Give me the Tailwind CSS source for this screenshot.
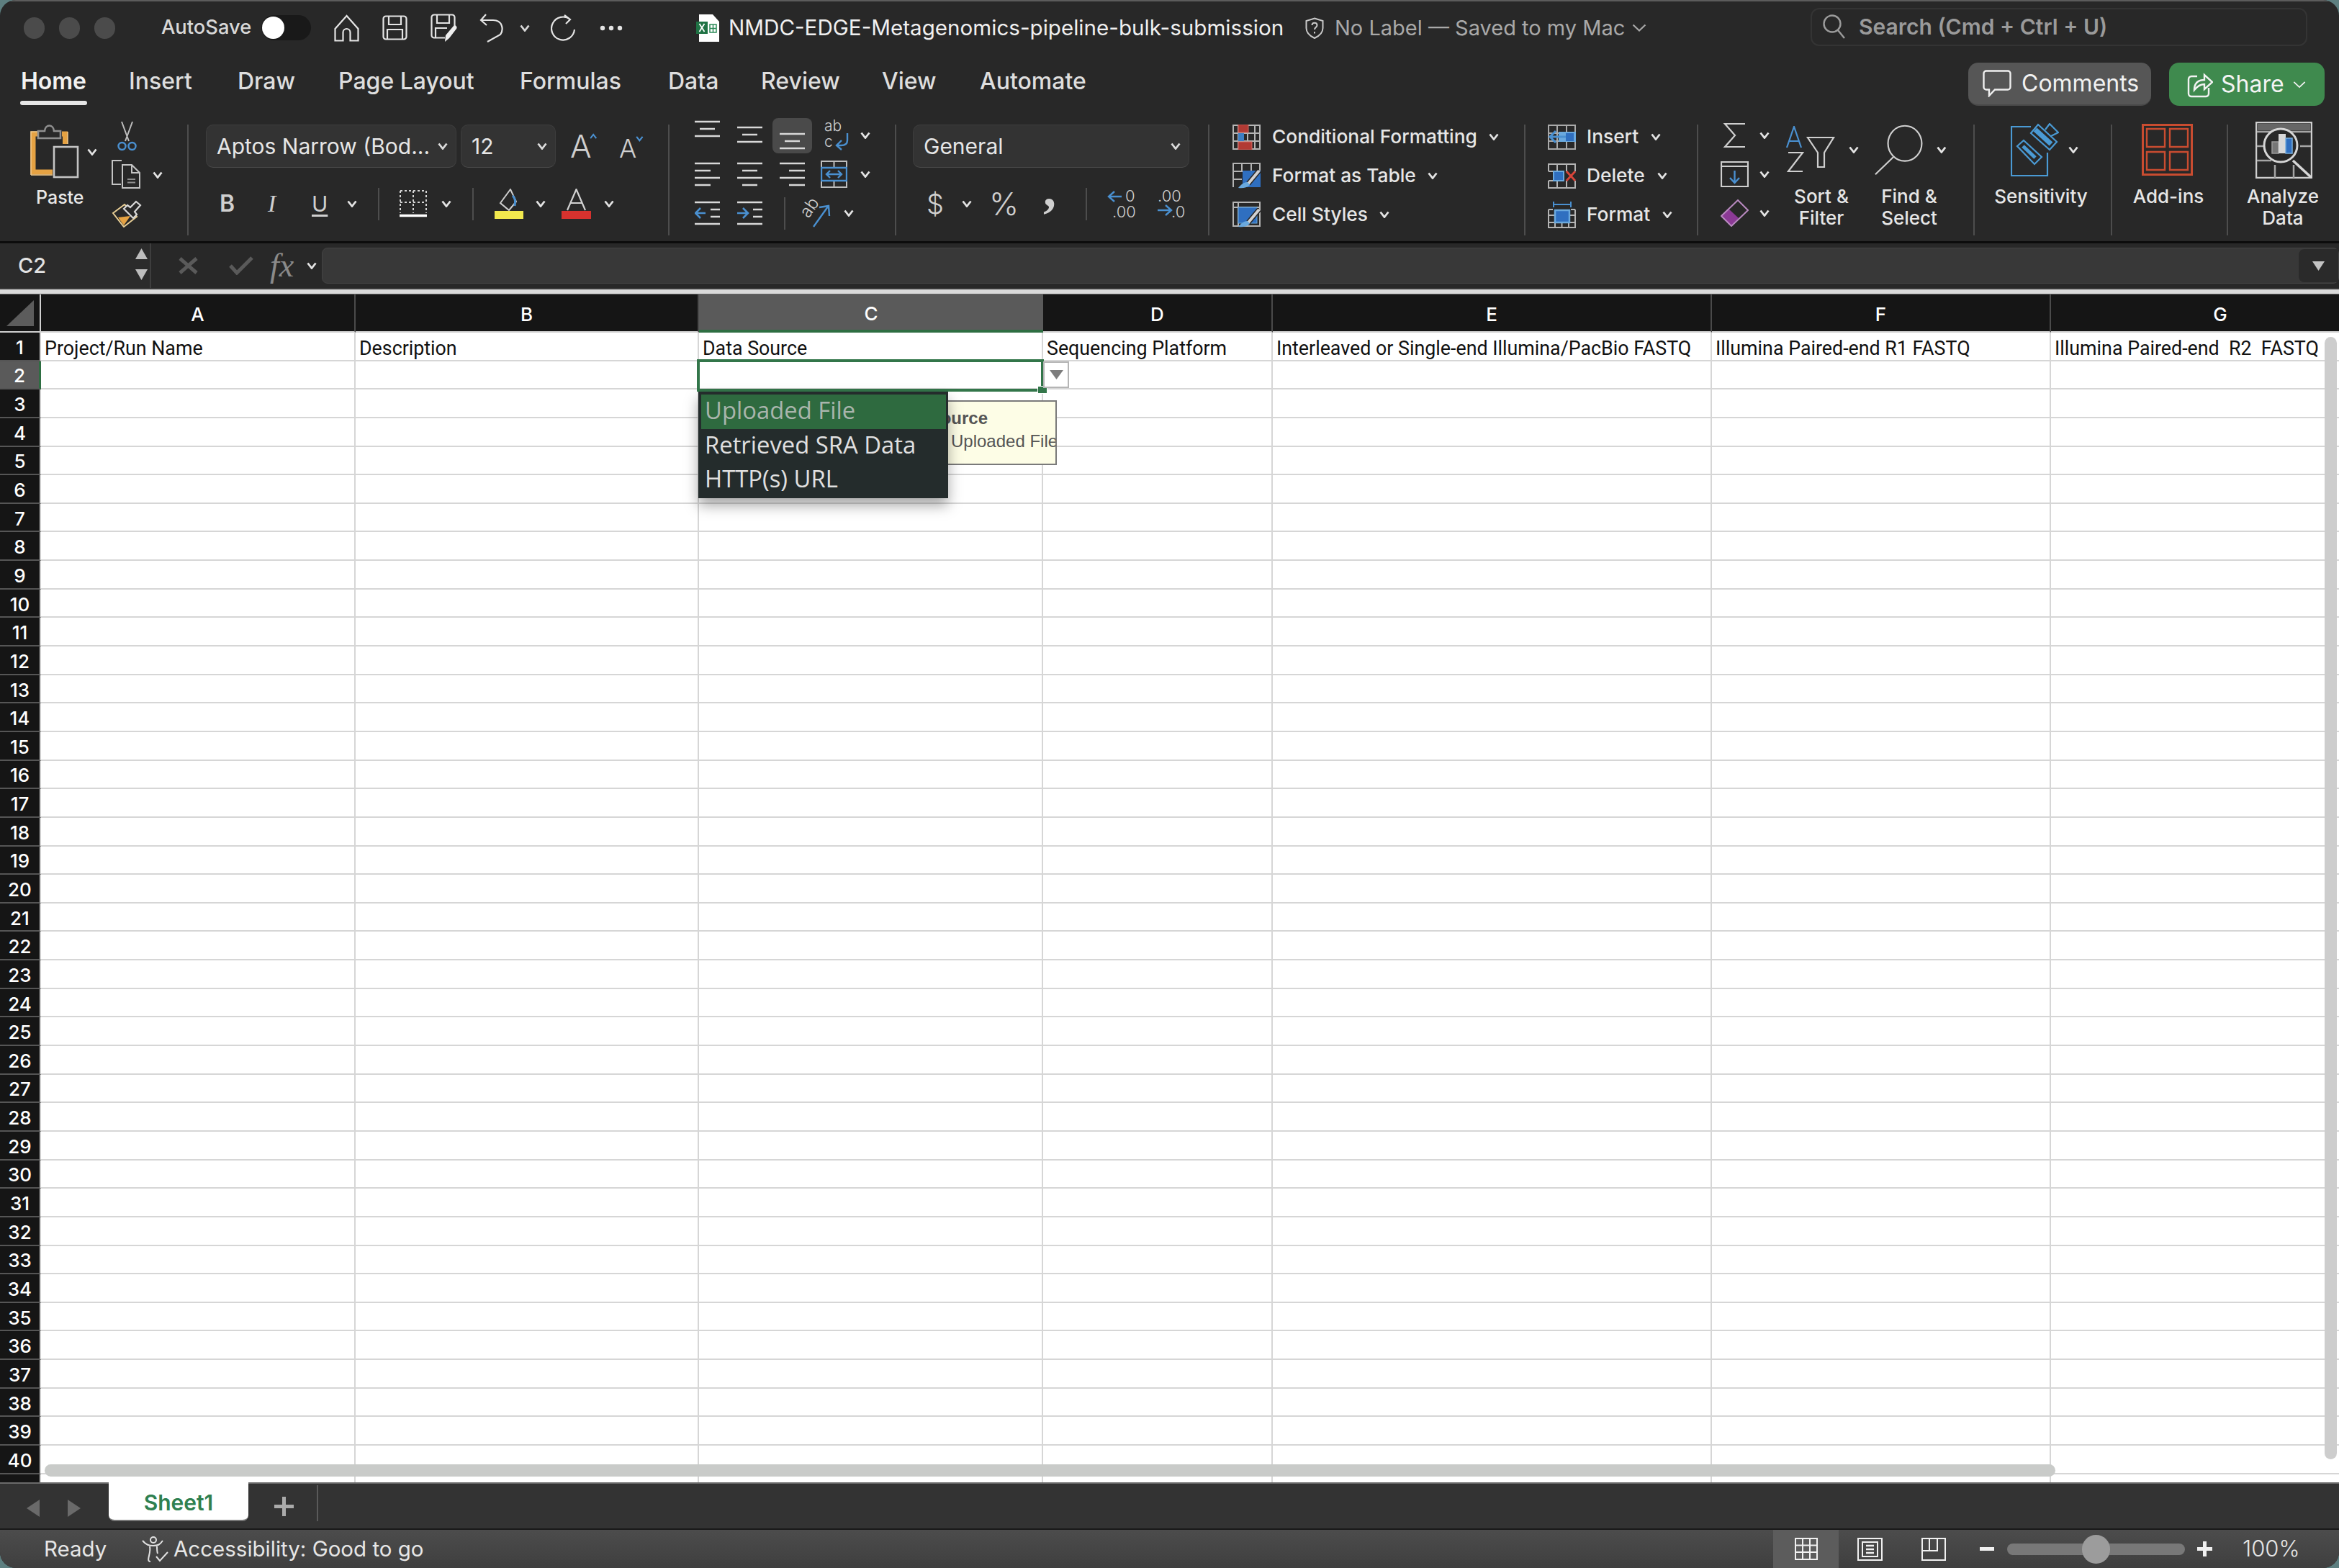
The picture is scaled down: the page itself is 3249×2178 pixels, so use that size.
<!DOCTYPE html>
<html lang="en">
<head>
<meta charset="UTF-8">
<title>NMDC-EDGE-Metagenomics-pipeline-bulk-submission</title>
<script src="https://cdn.jsdelivr.net/npm/@tailwindcss/browser@4"></script>
</head>
<body class="bg-[#5d7f80] w-[3249px] h-[2178px] overflow-hidden">
<!-- shared little icons -->
<svg class="hidden">
  <symbol id="chev" viewBox="0 0 14 10"><path d="M1.500 1.500 7 8.500l5.500-7" fill="none" stroke="currentColor" stroke-width="2.800"/></symbol>
  <symbol id="cells" viewBox="0 0 39 35"><path d="M1 1h37v33H1zM1 12h37M1 23h37M13 1v33M26 1v33" fill="none" stroke="#a9a9a9" stroke-width="2"/></symbol>
  <symbol id="al-top" viewBox="0 0 35 24"><path d="M0 2h35M7 12h21M0 22h35" fill="none" stroke="#d8d8d8" stroke-width="2.600"/></symbol>
  <symbol id="al-left" viewBox="0 0 35 34"><path d="M0 2h35M0 12h22M0 22h35M0 32h22" fill="none" stroke="#d8d8d8" stroke-width="2.600"/></symbol>
  <symbol id="al-center" viewBox="0 0 35 34"><path d="M0 2h35M7 12h21M0 22h35M7 32h21" fill="none" stroke="#d8d8d8" stroke-width="2.600"/></symbol>
  <symbol id="al-right" viewBox="0 0 35 34"><path d="M0 2h35M13 12h22M0 22h35M13 32h22" fill="none" stroke="#d8d8d8" stroke-width="2.600"/></symbol>
  <symbol id="brush" viewBox="0 0 39 36"><path d="M37 11 22 29" stroke="#282828" stroke-width="7"/><path d="M37 11 22 29" stroke="#d2d2d2" stroke-width="4"/><path d="M21 27c-5 0-9 3-13 8 6 1 12 0 16-4z" fill="#6aa9de"/></symbol>
</svg>

<div class="w-[3249px] h-[2178px] flex flex-col overflow-hidden rounded-[22px] bg-[#282828] [font-family:Inter,sans-serif] text-[#e6e6e6]">

  <!-- title bar -->
  <header class="h-[75px] shrink-0 flex items-center pl-[33px] border-t-2 border-[#5c5c5c]">
    <div class="flex gap-[20px]">
      <i class="w-[29px] h-[30px] rounded-full bg-[#4b4b4b]"></i>
      <i class="w-[29px] h-[30px] rounded-full bg-[#4b4b4b]"></i>
      <i class="w-[29px] h-[30px] rounded-full bg-[#4b4b4b]"></i>
    </div>
    <span class="ml-[64px] w-[124px] text-[27.300px] font-medium text-[#d8d8d8] whitespace-nowrap">AutoSave</span>
    <div class="ml-[15px] w-[69px] h-[35px] rounded-full bg-[#191919] flex items-center pl-[1px]"><i class="w-[31px] h-[31px] rounded-full bg-white"></i></div>
    <svg class="ml-[32px] w-[35px] h-[38px]" viewBox="0 0 35 38" fill="none" stroke="#e4e4e4" stroke-width="2.200"><path d="M17.500 2 1.500 20v16.500h11V25a5 5 0 0 1 10 0v11.500h11V20z"/></svg>
    <svg class="ml-[32px] w-[35px] h-[35px]" viewBox="0 0 35 35" fill="none" stroke="#e4e4e4" stroke-width="2.200"><path d="M5 1.500h25a3.500 3.500 0 0 1 3.500 3.500v25a3.500 3.500 0 0 1-3.500 3.500H5A3.500 3.500 0 0 1 1.500 30V5A3.500 3.500 0 0 1 5 1.500zM9 1.500V13h17V1.500M7 33.500V20h21v13.500"/></svg>
    <svg class="ml-[32px] w-[38px] h-[40px]" viewBox="0 0 38 40" fill="none" stroke="#e4e4e4" stroke-width="2.200"><path d="M20 33.500H5A3.500 3.500 0 0 1 1.500 30V5A3.500 3.500 0 0 1 5 1.500h25A3.500 3.500 0 0 1 33.500 5v12M9 1.500V13h17V1.500M7 33.500V20h16"/><path d="M21 30 32 17c2-2 6 1 4 4L26 34l-6 5z" fill="#efefef" stroke="none"/></svg>
    <svg class="ml-[30px] w-[34px] h-[40px]" viewBox="0 0 34 40" fill="none" stroke="#e4e4e4" stroke-width="2.200"><path d="M9 1 2 9l8 7M2 9h17c13 0 15 13 10 20L11 39"/></svg>
    <svg class="ml-[22px] w-[14px] h-[10px] text-[#d8d8d8]"><use href="#chev"/></svg>
    <svg class="ml-[29px] w-[36px] h-[38px]" viewBox="0 0 36 38" fill="none" stroke="#e4e4e4" stroke-width="2.200"><path d="M27 7A16 16 0 1 0 33 21M19 1l8 6-6 6"/></svg>
    <svg class="ml-[32px] w-[32px] h-[8px]" viewBox="0 0 32 8" fill="#e4e4e4"><circle cx="4" cy="4" r="3.200"/><circle cx="16" cy="4" r="3.200"/><circle cx="28" cy="4" r="3.200"/></svg>
    <svg class="ml-[102px] w-[32px] h-[38px]" viewBox="0 0 32 38"><path d="M4 0h19l9 10v28H4z" fill="#fff"/><rect y="10" width="16" height="17" fill="#1f7244"/><path d="M4.500 13l7 11M11.500 13l-7 11" stroke="#fff" stroke-width="1.800"/><path d="M19 14h9v11h-9zM19 19.500h9M23.500 14v11" fill="none" stroke="#2d8a58" stroke-width="1.500"/></svg>
    <span class="ml-[13px] w-[770px] text-[29.600px] text-[#f0f0f0] whitespace-nowrap">NMDC-EDGE-Metagenomics-pipeline-bulk-submission</span>
    <svg class="ml-[31px] w-[26px] h-[30px]" viewBox="0 0 26 30" fill="none" stroke="#c9c9c9" stroke-width="2"><path d="M13 1.500 24.500 5v10c0 8-6 11.500-11.500 14C7.500 26.500 1.500 23 1.500 15V5z"/><path d="M9.500 11c0-4.500 7-4.500 7 0 0 3-3.500 3-3.500 6M13 20v2.500"/></svg>
    <span class="ml-[15px] w-[404px] text-[29px] text-[#a9a9a9] whitespace-nowrap">No Label — Saved to my Mac</span>
    <svg class="ml-[9px] w-[20px] h-[11px] text-[#a9a9a9]" viewBox="0 0 20 11" fill="none" stroke="currentColor" stroke-width="2.200"><path d="M1.500 1.500 10 9.500l8.500-8"/></svg>
    <div class="ml-[228px] w-[690px] h-[53px] rounded-[12px] border-2 border-[#343434] flex items-center pl-[15px] mt-[-3px]">
      <svg class="w-[31px] h-[34px]" viewBox="0 0 31 34" fill="none" stroke="#9c9c9c" stroke-width="2.400"><circle cx="13" cy="13" r="11.500"/><path d="M21 22l9 11"/></svg>
      <span class="ml-[19px] text-[30px] font-semibold text-[#9a9a9a] whitespace-nowrap">Search (Cmd + Ctrl + U)</span>
    </div>
  </header>

  <!-- tabs -->
  <nav class="h-[75px] shrink-0 flex items-start text-[32px] font-medium text-[#dedede] whitespace-nowrap">
    <div class="ml-[28px] w-[93px] h-[71px] flex flex-col items-center pt-[14px] relative text-[#f2f2f2] font-semibold">Home<i class="absolute left-0 bottom-[0px] w-[93px] h-[6px] rounded-full bg-[#e6e6e6]"></i></div>
    <span class="ml-[58px] w-[88px] text-center pt-[14px]">Insert</span>
    <span class="ml-[63px] w-[78px] text-center pt-[14px]">Draw</span>
    <span class="ml-[62px] w-[188px] text-center pt-[14px]">Page Layout</span>
    <span class="ml-[64px] w-[141px] text-center pt-[14px]">Formulas</span>
    <span class="ml-[65px] w-[70px] text-center pt-[14px]">Data</span>
    <span class="ml-[59px] w-[108px] text-center pt-[14px]">Review</span>
    <span class="ml-[60px] w-[73px] text-center pt-[14px]">View</span>
    <span class="ml-[63px] w-[147px] text-center pt-[14px]">Automate</span>
    <div class="ml-auto mt-[12px] w-[254px] h-[60px] rounded-[14px] bg-[#565656] border-b-2 border-[#484848] flex items-center pl-[20px] text-[#f2f2f2]">
      <svg class="w-[40px] h-[38px]" viewBox="0 0 40 38" fill="none" stroke="#efefef" stroke-width="2.400"><path d="M5 1.500h30a3.500 3.500 0 0 1 3.500 3.500v19a3.500 3.500 0 0 1-3.500 3.500H17L9 36v-8.500H5A3.500 3.500 0 0 1 1.500 24V5A3.500 3.500 0 0 1 5 1.500z"/></svg>
      <span class="ml-[14px] font-normal">Comments</span>
    </div>
    <div class="ml-[25px] mr-[20px] mt-[12px] w-[216px] h-[60px] rounded-[14px] bg-[#3f8a4e] flex items-center pl-[25px] text-[#f4f4f4]">
      <svg class="w-[36px] h-[38px]" viewBox="0 0 36 38" fill="none" stroke="#f2f2f2" stroke-width="2.400"><path d="M14 8H6a4 4 0 0 0-4 4v20a4 4 0 0 0 4 4h20a4 4 0 0 0 4-4v-8"/><path d="M10 27c0-9 5-14 14-14V6l11 10-11 10v-7c-6 0-10 3-14 8z"/></svg>
      <span class="ml-[11px] font-normal">Share</span>
      <svg class="ml-[12px] w-[18px] h-[11px] text-[#f2f2f2]" viewBox="0 0 20 11" fill="none" stroke="currentColor" stroke-width="2"><path d="M1.500 1.500 10 9.500l8.500-8"/></svg>
    </div>
  </nav>

  <!-- ribbon -->
  <section class="h-[185px] shrink-0 flex items-start text-[26px] font-medium whitespace-nowrap">

    <!-- clipboard -->
    <div class="w-[260px] shrink-0 flex">
      <div class="ml-[42px] mt-[23px] w-[93px]">
        <div class="flex items-center">
          <svg class="w-[68px] h-[75px]" viewBox="0 0 68 75" fill="none"><path d="M11 13H4v53h27" stroke="#e5a243" stroke-width="7"/><path d="M44 13h4.500v14" stroke="#e5a243" stroke-width="7"/><path d="M1 70h30M1 70V10h9M52 10v17" stroke="#f0c98c" stroke-width="1.500"/><path d="M11 19V9h9c1-10 12-10 13 0h9v10z" fill="#282828" stroke="#8f8f8f" stroke-width="2.600"/><rect x="33" y="31" width="33" height="42" fill="#282828" stroke="#c4c4c4" stroke-width="2.600"/></svg>
          <svg class="ml-[11px] w-[14px] h-[10px] text-[#e4e4e4]"><use href="#chev"/></svg>
        </div>
        <div class="mt-[8px] ml-[8px] text-[25px] text-[#e8e8e8]">Paste</div>
      </div>
      <div class="ml-[20px] flex flex-col">
        <svg class="ml-[8px] mt-[18px] w-[27px] h-[42px]" viewBox="0 0 27 42" fill="none" stroke-width="2"><path d="M6 1l10 27M21 1 11 28" stroke="#bdbdbd"/><circle cx="6.500" cy="35" r="5" stroke="#4a90d0" stroke-width="2.400"/><circle cx="20.500" cy="35" r="5" stroke="#4a90d0" stroke-width="2.400"/></svg>
        <div class="mt-[12px] flex items-center">
          <svg class="w-[42px] h-[41px]" viewBox="0 0 42 41" fill="none" stroke="#c4c4c4" stroke-width="2"><path d="M14 1H1v33h12"/><path d="M15 7h13l11 11v21H15zM28 7v11h11"/><path d="M22 27h11M22 31.500h11" stroke="#8f8f8f" stroke-width="2.200"/></svg>
          <svg class="ml-[15px] w-[14px] h-[10px] text-[#e4e4e4]"><use href="#chev"/></svg>
        </div>
        <svg class="mt-[15px] w-[42px] h-[38px]" viewBox="0 0 42 38" fill="none"><path d="M2 18 18 6l17 17-18 14z" stroke="#e9cf96" stroke-width="2"/><path d="M17 35l9-13-17 2z" fill="#e5a243"/><path d="M34 2l6 5-8 9 3 4-5 5-13-13 5-5 4 3z" fill="#282828" stroke="#d8d8d8" stroke-width="2.200"/></svg>
      </div>
    </div>
    <i class="mt-[23px] w-[2px] h-[154px] shrink-0 bg-[#4d4d4d]"></i>

    <!-- font -->
    <div class="w-[666px] shrink-0 pt-[23px]">
      <div class="flex items-center text-[30px] font-normal h-[60px]">
        <div class="ml-[24px] w-[348px] h-[60px] rounded-[10px] bg-[#333333] border border-[#3d3d3d] border-b-[#4a4a4a] flex items-center justify-between pl-[14px] pr-[11px]">Aptos Narrow (Bod...<svg class="w-[14px] h-[10px] text-[#dcdcdc]"><use href="#chev"/></svg></div>
        <div class="ml-[6px] w-[132px] h-[60px] rounded-[10px] bg-[#333333] border border-[#3d3d3d] border-b-[#4a4a4a] flex items-center justify-between pl-[14px] pr-[11px]">12<svg class="w-[14px] h-[10px] text-[#dcdcdc]"><use href="#chev"/></svg></div>
        <div class="ml-[20px] w-[37px] flex items-start text-[44px] font-light leading-none text-[#cfcfcf]">A<svg class="mt-[4px] w-[12px] h-[9px] text-[#4a90d0] rotate-180 ml-[-3px]"><use href="#chev"/></svg></div>
        <div class="ml-[31px] w-[34px] flex items-start text-[36px] font-light leading-none text-[#cfcfcf] mt-[5px]">A<svg class="w-[12px] h-[9px] text-[#4a90d0] ml-[-1px]"><use href="#chev"/></svg></div>
      </div>
      <div class="mt-[30px] h-[40px] flex items-center">
        <b class="ml-[43px] w-[20px] text-[32px] leading-none font-semibold text-[#cfcfcf]">B</b>
        <em class="ml-[47px] w-[16px] text-[34px] leading-none text-[#cfcfcf] [font-family:'Liberation_Serif',serif]">I</em>
        <span class="ml-[45px] w-[21px] text-[30px] leading-none font-normal text-[#cfcfcf] underline underline-offset-4">U</span>
        <svg class="ml-[28px] w-[14px] h-[10px] text-[#e4e4e4]"><use href="#chev"/></svg>
        <i class="ml-[29px] w-[2px] h-[45px] bg-[#4d4d4d]"></i>
        <svg class="ml-[28px] w-[38px] h-[38px]" viewBox="0 0 38 38" fill="none" stroke="#d6d6d6" stroke-width="2"><path d="M1 1h36M1 1v31M37 1v31M19 1v31M1 17h36" stroke-dasharray="3 3"/><path d="M0 35.500h38" stroke="#fff" stroke-width="3.500"/></svg>
        <svg class="ml-[20px] w-[14px] h-[10px] text-[#e4e4e4]"><use href="#chev"/></svg>
        <i class="ml-[29px] w-[2px] h-[45px] bg-[#4d4d4d]"></i>
        <svg class="ml-[29px] w-[40px] h-[42px]" viewBox="0 0 40 42" fill="none"><path d="M22 1 8 20l12 10 10-12z" stroke="#cfcfcf" stroke-width="2"/><path d="M25 10c4 3 4 9 3 14" stroke="#4a90d0" stroke-width="3"/><rect y="31" width="40" height="11" fill="#f2e94e"/></svg>
        <svg class="ml-[17px] w-[14px] h-[10px] text-[#e4e4e4]"><use href="#chev"/></svg>
        <svg class="ml-[22px] w-[41px] h-[42px]" viewBox="0 0 41 42" fill="none"><path d="M8 30 20.500 1 33 30M12 20h17" stroke="#d2d2d2" stroke-width="2.200"/><rect y="31" width="41" height="11" fill="#d6322e"/></svg>
        <svg class="ml-[18px] w-[14px] h-[10px] text-[#e4e4e4]"><use href="#chev"/></svg>
      </div>
    </div>
    <i class="mt-[23px] w-[2px] h-[154px] shrink-0 bg-[#4d4d4d]"></i>

    <!-- alignment -->
    <div class="w-[313px] shrink-0 pt-[11px]">
      <div class="h-[54px] flex items-center">
        <svg class="ml-[35px] mb-[18px] w-[35px] h-[24px]"><use href="#al-top"/></svg>
        <svg class="ml-[24px] mb-[3px] w-[35px] h-[24px]"><use href="#al-top"/></svg>
        <div class="ml-[14px] w-[55px] h-[49px] rounded-[8px] bg-[#4a4a4a] flex justify-center items-end pb-[5px]"><svg class="w-[35px] h-[24px]"><use href="#al-top"/></svg></div>
        <svg class="ml-[17px] w-[36px] h-[44px] overflow-visible" viewBox="0 0 36 44" fill="none"><text x="0" y="16" font-size="21" fill="#cfcfcf" font-family="Inter" font-weight="300">ab</text><text x="0" y="38" font-size="21" fill="#cfcfcf" font-family="Inter" font-weight="300">c</text><path d="M32 19v10c0 5-4 7-9 7h-6M24 29l-7 7 7 6" stroke="#4a90d0" stroke-width="2.400"/></svg>
        <svg class="ml-[14px] w-[14px] h-[10px] text-[#e4e4e4]"><use href="#chev"/></svg>
      </div>
      <div class="h-[54px] flex items-center">
        <svg class="ml-[35px] w-[35px] h-[34px]"><use href="#al-left"/></svg>
        <svg class="ml-[24px] w-[35px] h-[34px]"><use href="#al-center"/></svg>
        <svg class="ml-[24px] w-[35px] h-[34px]"><use href="#al-right"/></svg>
        <svg class="ml-[22px] w-[37px] h-[38px]" viewBox="0 0 37 38" fill="none"><path d="M1 1h35v36H1zM1 10h35M1 28h35M18.500 1v9M18.500 28v9" stroke="#bdbdbd" stroke-width="2"/><path d="M1 10h35v18H1z" stroke="#4a90d0" stroke-width="2.400"/><path d="M8 19h21M13 14l-5 5 5 5M24 14l5 5-5 5" stroke="#4a90d0" stroke-width="2.400"/></svg>
        <svg class="ml-[18px] w-[14px] h-[10px] text-[#e4e4e4]"><use href="#chev"/></svg>
      </div>
      <div class="h-[54px] flex items-center">
        <svg class="ml-[35px] w-[35px] h-[34px]" viewBox="0 0 35 34" fill="none"><path d="M0 2h35M22 12h13M22 22h13M0 32h35" stroke="#d8d8d8" stroke-width="2.600"/><path d="M15 17H2M8 10l-7 7 7 7" stroke="#4a90d0" stroke-width="2.600"/></svg>
        <svg class="ml-[24px] w-[35px] h-[34px]" viewBox="0 0 35 34" fill="none"><path d="M0 2h35M22 12h13M22 22h13M0 32h35" stroke="#d8d8d8" stroke-width="2.600"/><path d="M0 17h14M8 10l7 7-7 7" stroke="#4a90d0" stroke-width="2.600"/></svg>
        <i class="ml-[30px] w-[2px] h-[45px] bg-[#4d4d4d]"></i>
        <svg class="ml-[26px] w-[41px] h-[40px] overflow-visible" viewBox="0 0 41 40" fill="none"><text transform="translate(6 28) rotate(-55)" font-size="24" fill="#cfcfcf" font-family="Inter" font-weight="300">ab</text><path d="M13 39 33 11M21 12l13-2 1 14" stroke="#4a90d0" stroke-width="2.400"/></svg>
        <svg class="ml-[14px] w-[14px] h-[10px] text-[#e4e4e4]"><use href="#chev"/></svg>
      </div>
    </div>
    <i class="mt-[23px] w-[2px] h-[154px] shrink-0 bg-[#4d4d4d]"></i>

    <!-- number -->
    <div class="w-[433px] shrink-0 pt-[23px]">
      <div class="ml-[23px] w-[384px] h-[60px] rounded-[10px] bg-[#333333] border border-[#3d3d3d] border-b-[#4a4a4a] flex items-center justify-between pl-[14px] pr-[11px] text-[30px] font-normal">General<svg class="w-[14px] h-[10px] text-[#dcdcdc]"><use href="#chev"/></svg></div>
      <div class="mt-[30px] h-[40px] flex items-center text-[#cfcfcf] font-normal leading-none">
        <span class="ml-[42px] w-[20px] text-[38px] font-light">$</span>
        <svg class="ml-[29px] w-[14px] h-[10px] text-[#e4e4e4]"><use href="#chev"/></svg>
        <span class="ml-[24px] w-[37px] text-[44px] font-light">%</span>
        <span class="ml-[38px] w-[19px] text-[72px] font-bold [font-family:'Liberation_Serif',serif] mt-[-40px]">,</span>
        <i class="ml-[40px] w-[2px] h-[45px] bg-[#4d4d4d]"></i>
        <svg class="ml-[28px] w-[40px] h-[40px] overflow-visible" viewBox="0 0 40 40" fill="none"><text x="25" y="17" font-size="22" fill="#cfcfcf" font-family="Inter" font-weight="300">0</text><text x="7" y="39" font-size="22" fill="#cfcfcf" font-family="Inter" font-weight="300">.00</text><path d="M20 10H3M10 3 2 10l8 7" stroke="#4a90d0" stroke-width="2.400"/></svg>
        <svg class="ml-[30px] w-[36px] h-[40px] overflow-visible" viewBox="0 0 36 40" fill="none"><text x="0" y="17" font-size="22" fill="#cfcfcf" font-family="Inter" font-weight="300">.00</text><text x="19" y="39" font-size="22" fill="#cfcfcf" font-family="Inter" font-weight="300">.0</text><path d="M0 29h18M11 22l8 7-8 7" stroke="#4a90d0" stroke-width="2.400"/></svg>
      </div>
    </div>
    <i class="mt-[23px] w-[2px] h-[154px] shrink-0 bg-[#4d4d4d]"></i>

    <!-- styles -->
    <div class="w-[437px] shrink-0 pt-[13px] text-[26.300px]">
      <div class="h-[54px] flex items-center">
        <svg class="ml-[32px] w-[39px] h-[35px]" viewBox="0 0 39 35"><path d="M1 1h37v33H1zM1 12h37M1 23h37M8 1v33M21 1v33M31 1v33" fill="none" stroke="#b4b4b4" stroke-width="2"/><rect x="8" y="0" width="14" height="11" fill="#b23a34" stroke="#d06a64"/><rect x="8" y="24" width="19" height="11" fill="#b23a34" stroke="#d06a64"/><rect x="8" y="12" width="8" height="11" fill="#3c7fc4"/></svg>
        <span class="ml-[16px]">Conditional Formatting</span>
        <svg class="ml-[16px] w-[14px] h-[10px] text-[#e4e4e4]"><use href="#chev"/></svg>
      </div>
      <div class="h-[54px] flex items-center">
        <svg class="ml-[32px] w-[39px] h-[36px]" viewBox="0 0 39 36" fill="none"><path d="M1 34V1h37v11M1 12h37M1 23h12M13 1v11M26 1v11" stroke="#b4b4b4" stroke-width="2"/><rect x="14" y="11" width="25" height="23" fill="#2f6fc0"/><use href="#brush" width="39" height="36"/></svg>
        <span class="ml-[16px]">Format as Table</span>
        <svg class="ml-[16px] w-[14px] h-[10px] text-[#e4e4e4]"><use href="#chev"/></svg>
      </div>
      <div class="h-[54px] flex items-center">
        <svg class="ml-[32px] w-[39px] h-[36px]" viewBox="0 0 39 36" fill="none"><path d="M1 1h37v33H1zM1 8h37M8 1v33" stroke="#b4b4b4" stroke-width="2"/><rect x="8" y="8" width="26" height="22" fill="#2f6fc0" stroke="#6aa9de"/><use href="#brush" width="39" height="36"/></svg>
        <span class="ml-[16px]">Cell Styles</span>
        <svg class="ml-[16px] w-[14px] h-[10px] text-[#e4e4e4]"><use href="#chev"/></svg>
      </div>
    </div>
    <i class="mt-[23px] w-[2px] h-[154px] shrink-0 bg-[#4d4d4d]"></i>

    <!-- cells -->
    <div class="w-[238px] shrink-0 pt-[13px] text-[26.300px]">
      <div class="h-[54px] flex items-center">
        <svg class="ml-[31px] w-[39px] h-[35px]" viewBox="0 0 39 35"><use href="#cells" width="39" height="35"/><rect x="15" y="10" width="24" height="14" fill="#6aa9de"/><rect x="25" y="12" width="11" height="11" fill="#2f6fc0"/><path d="M25 17H3M11 9l-8 8 8 8" fill="none" stroke="#4a90d0" stroke-width="3"/></svg>
        <span class="ml-[15px]">Insert</span>
        <svg class="ml-[17px] w-[14px] h-[10px] text-[#e4e4e4]"><use href="#chev"/></svg>
      </div>
      <div class="h-[54px] flex items-center">
        <svg class="ml-[31px] w-[39px] h-[35px]" viewBox="0 0 39 35" fill="none"><path d="M1 11V1h37v10M1 24v10h37V24M13 1v10M26 1v10M13 24v10M26 24v10M1 11h8M1 24h8" stroke="#b4b4b4" stroke-width="2"/><rect x="8" y="11" width="14" height="13" fill="#2f6fc0" stroke="#6aa9de" stroke-width="2"/><path d="M26 11l12 13M38 11 26 24" stroke="#d9453a" stroke-width="2.800"/></svg>
        <span class="ml-[15px]">Delete</span>
        <svg class="ml-[17px] w-[14px] h-[10px] text-[#e4e4e4]"><use href="#chev"/></svg>
      </div>
      <div class="h-[54px] flex items-center">
        <svg class="ml-[31px] w-[39px] h-[38px]" viewBox="0 0 39 38" fill="none"><path d="M1 12v25h37V12M1 12h6M32 12h6M1 20h37M1 30h37M10 12v25M29 12v25M19.500 30v7" stroke="#b4b4b4" stroke-width="2"/><rect x="10" y="13" width="20" height="17" fill="#2f6fc0" stroke="#6aa9de" stroke-width="2.500"/><path d="M8 1v8M8 5h24M32 1v8" stroke="#4a90d0" stroke-width="2"/></svg>
        <span class="ml-[15px]">Format</span>
        <svg class="ml-[17px] w-[14px] h-[10px] text-[#e4e4e4]"><use href="#chev"/></svg>
      </div>
    </div>
    <i class="mt-[23px] w-[2px] h-[154px] shrink-0 bg-[#4d4d4d]"></i>

    <!-- editing -->
    <div class="w-[382px] shrink-0 flex">
      <div class="ml-[31px] pt-[11px]">
        <div class="h-[54px] flex items-center">
          <svg class="ml-[3px] w-[33px] h-[36px]" viewBox="0 0 33 36" fill="none" stroke="#cfcfcf" stroke-width="2.200"><path d="M31 2H3l14 16L3 34h28"/></svg>
          <svg class="ml-[18px] w-[14px] h-[10px] text-[#e4e4e4]"><use href="#chev"/></svg>
        </div>
        <div class="h-[54px] flex items-center">
          <svg class="w-[39px] h-[36px]" viewBox="0 0 39 36" fill="none"><path d="M1 1h37v34H1zM1 7h37" stroke="#cfcfcf" stroke-width="2.200"/><path d="M19.500 13v17M13 23l6.500 7 6.500-7" stroke="#4a90d0" stroke-width="2.400"/></svg>
          <svg class="ml-[15px] w-[14px] h-[10px] text-[#e4e4e4]"><use href="#chev"/></svg>
        </div>
        <div class="h-[54px] flex items-center">
          <svg class="w-[39px] h-[38px]" viewBox="0 0 39 38"><path d="M1 23 11 13l14 13-10 11z" fill="#8c3a96"/><path d="M1 23 24 1l14 14-23 22z" fill="none" stroke="#b98ac0" stroke-width="2"/></svg>
          <svg class="ml-[15px] w-[14px] h-[10px] text-[#e4e4e4]"><use href="#chev"/></svg>
        </div>
      </div>
      <div class="ml-[20px] w-[104px] pt-[18px] text-center">
        <div class="h-[80px] pl-[3px] flex items-center">
          <svg class="w-[70px] h-[66px]" viewBox="0 0 70 66" fill="none" stroke-width="2.200"><path d="M1 30 11 1l10 29M5 21h13" stroke="#4a90d0"/><path d="M3 37h20L3 63h20" stroke="#cfcfcf"/><path d="M30 16h36L53 37v20h-9V37z" stroke="#cfcfcf"/></svg>
          <svg class="ml-[17px] w-[14px] h-[10px] text-[#e4e4e4]"><use href="#chev"/></svg>
        </div>
        <div class="mt-[10px] leading-[30px]">Sort &amp;<br>Filter</div>
      </div>
      <div class="ml-[18px] w-[104px] pt-[18px] text-center">
        <div class="h-[80px] pl-[3px] flex items-center">
          <svg class="w-[72px] h-[72px]" viewBox="0 0 72 72" fill="none" stroke="#cfcfcf" stroke-width="2.200"><ellipse cx="44" cy="27" rx="24" ry="25"/><path d="M28 46 2 71"/></svg>
          <svg class="ml-[17px] w-[14px] h-[10px] text-[#e4e4e4]"><use href="#chev"/></svg>
        </div>
        <div class="mt-[10px] leading-[30px]">Find &amp;<br>Select</div>
      </div>
    </div>
    <i class="mt-[23px] w-[2px] h-[154px] shrink-0 bg-[#4d4d4d]"></i>

    <!-- sensitivity -->
    <div class="w-[189px] shrink-0 pt-[18px]">
      <div class="h-[80px] ml-[50px] flex items-center">
        <svg class="w-[67px] h-[75px]" viewBox="0 0 67 75" fill="none" stroke="#4a9ad4" stroke-width="2.200"><path d="M28 5H1v68h50V41"/><path d="M48 9 54 1l12 12-12 6"/><path d="M38 2l26 24-10 11-26-23z" fill="#282828"/><path d="M34 9l22 20" stroke-width="7"/><path d="M18 24l25 23-10 10L9 32z" fill="#282828"/><path d="M17 32l17 16" stroke-width="5"/></svg>
        <svg class="ml-[13px] w-[14px] h-[10px] text-[#e4e4e4]"><use href="#chev"/></svg>
      </div>
      <div class="mt-[10px] w-[184px] text-center leading-[30px]">Sensitivity</div>
    </div>
    <i class="mt-[23px] w-[2px] h-[154px] shrink-0 bg-[#4d4d4d]"></i>

    <!-- add-ins -->
    <div class="w-[159px] shrink-0 pt-[18px]">
      <div class="h-[80px] ml-[41px] flex items-center">
        <svg class="w-[71px] h-[72px]" viewBox="0 0 71 72" fill="none" stroke="#c94c30" stroke-width="2.400"><path d="M1.500 1.500h68v69h-68z" stroke-width="3"/><path d="M7 7h25v25H7zM39 7h25v25H39zM7 39h25v25H7zM39 39h25v25H39z"/></svg>
      </div>
      <div class="mt-[10px] w-[156px] text-center leading-[30px]">Add-ins</div>
    </div>
    <i class="mt-[23px] w-[2px] h-[154px] shrink-0 bg-[#4d4d4d]"></i>

    <!-- analyze -->
    <div class="w-[154px] shrink-0 pt-[18px]">
      <div class="h-[80px] ml-[38px] flex items-center">
        <svg class="w-[79px] h-[79px]" viewBox="0 0 79 79" fill="none"><path d="M1 1h77v77H1z" stroke="#cfcfcf" stroke-width="2.500"/><rect x="3" y="3" width="73" height="9" fill="#666666"/><path d="M2 14h75M2 34h9M62 34h15M2 54h20M27 60v18M53 60v18" stroke="#a5a5a5" stroke-width="2.500"/><circle cx="35" cy="33" r="23" fill="#282828" stroke="#d6d6d6" stroke-width="3"/><rect x="23" y="28" width="9" height="16" fill="#777777" stroke="#9a9a9a" stroke-width="1.500"/><rect x="32" y="17" width="10" height="27" fill="#d8d8d8"/><rect x="42" y="23" width="9" height="21" fill="#2f6fc0" stroke="#7aaedc" stroke-width="1.500"/><path d="M52 54l26 24" stroke="#d6d6d6" stroke-width="3.500"/></svg>
      </div>
      <div class="mt-[10px] w-[152px] text-center leading-[30px]">Analyze<br>Data</div>
    </div>
  </section>

  <i class="h-[3px] shrink-0 bg-[#0c0c0c]"></i>

  <!-- formula bar -->
  <div class="h-[64px] shrink-0 flex items-center bg-[#282828] border-b-2 border-[#3a3a3a]">
    <div class="w-[210px] self-stretch shrink-0 bg-[#2b2b2b] border-r-2 border-[#3e3e3e] flex items-center justify-between pl-[25px] pr-[3px] text-[29px] font-medium text-[#e2e2e2]">
      C2
      <div class="flex flex-col gap-[14px] mt-[-4px]">
        <svg class="w-[17px] h-[15px]" viewBox="0 0 17 15"><path d="M8.500 0 17 15H0z" fill="#bdbdbd"/></svg>
        <svg class="w-[17px] h-[15px]" viewBox="0 0 17 15"><path d="M0 0h17L8.500 15z" fill="#bdbdbd"/></svg>
      </div>
    </div>
    <svg class="ml-[38px] w-[27px] h-[24px]" viewBox="0 0 27 24" fill="none" stroke="#5a5a5a" stroke-width="5"><path d="M2 2l23 20M25 2 2 22"/></svg>
    <svg class="ml-[43px] w-[34px] h-[26px]" viewBox="0 0 34 26" fill="none" stroke="#5a5a5a" stroke-width="5"><path d="M2 13l9 10L32 2"/></svg>
    <span class="ml-[23px] w-[36px] text-[46px] italic leading-none text-[#8a8a8a] [font-family:'Liberation_Serif',serif]">fx</span>
    <svg class="ml-[15px] w-[14px] h-[10px] text-[#e4e4e4]"><use href="#chev"/></svg>
    <div class="ml-[7px] flex-1 h-[50px] rounded-[8px] bg-[#383838] border border-[#444444] flex justify-end items-center">
      <div class="w-[55px] h-[46px] bg-[#2a2a2a] rounded-l-[8px] flex justify-center items-center"><svg class="w-[17px] h-[13px]" viewBox="0 0 17 13"><path d="M0 0h17L8.500 13z" fill="#c4c4c4"/></svg></div>
    </div>
  </div>
  <i class="h-[7px] shrink-0 bg-[#dadada] border-b border-[#666666]"></i>

  <!-- sheet -->
  <div class="h-[1650px] shrink-0 relative overflow-hidden bg-white">
    <div id="sheet" class="w-[3341px] grid grid-cols-[57px_437px_477px_478px_319px_610px_471px_472px] grid-rows-[53px_repeat(41,39.650px)]"></div>

    <!-- selected cell -->
    <div class="absolute left-[968px] top-[90px] w-[482px] h-[45px] border-[4px] border-[#33764a]"></div>
    <i class="absolute left-[1441px] top-[127px] w-[14px] h-[11px] bg-[#33764a] border border-white"></i>
    <div class="absolute left-[1449px] top-[93px] w-[36px] h-[37px] bg-white border-2 border-[#b5b5b5] flex items-center justify-center"><svg class="w-[19px] h-[13px]" viewBox="0 0 19 13"><path d="M0 0h19L9.500 13z" fill="#7d7d7d"/></svg></div>

    <!-- input message, partly behind the list -->
    <div class="absolute left-[1230px] top-[147px] w-[238px] h-[90px] bg-[#fdfde6] border-2 border-[#7a7a7a] overflow-hidden whitespace-nowrap text-[24px] text-[#555555] [font-family:'Liberation_Sans',sans-serif]">
      <div class="font-bold pt-[8px] leading-[30px]">Data Source</div>
      <div class="pl-[89px] leading-[30px] pt-[2px]">Uploaded File</div>
    </div>

    <!-- validation list -->
    <ul class="absolute left-[970px] top-[135px] w-[347px] h-[148px] bg-[#242c2c] border-t-[4px] border-l-[4px] border-r-[3px] border-[#242c2c] shadow-[0_10px_18px_rgba(0,0,0,0.35)] text-[32.800px] leading-[44px] text-[#e0e0e0] [font-family:'Open_Sans',sans-serif] whitespace-nowrap">
      <li class="h-[47.500px] bg-[#2e6a3f] text-[#a9b5ac] pl-[5px]">Uploaded File</li>
      <li class="h-[47.500px] pl-[5px]">Retrieved SRA Data</li>
      <li class="h-[47.500px] pl-[5px]">HTTP(s) URL</li>
    </ul>

    <!-- scrollbars -->
    <i class="absolute left-[62px] top-[1625px] w-[2793px] h-[17px] rounded-full bg-[#c9cbc9]"></i>
    <i class="absolute left-[3229px] top-[59px] w-[17px] h-[1559px] rounded-full bg-[#cdcdcd]"></i>
  </div>

  <!-- sheet tabs -->
  <div class="h-[64px] shrink-0 flex items-start bg-[#333333] border-t-2 border-[#6a6a6a]">
    <svg class="ml-[37px] mt-[22px] w-[18px] h-[24px]" viewBox="0 0 18 24"><path d="M18 0v24L0 12z" fill="#6a6a6a"/></svg>
    <svg class="ml-[39px] mt-[22px] w-[18px] h-[24px]" viewBox="0 0 18 24"><path d="M0 0v24l18-12z" fill="#6a6a6a"/></svg>
    <div class="ml-[39px] mt-[-2px] pt-[5px] w-[194px] h-[54px] bg-white rounded-b-[8px] border-b-2 border-[#777777] flex items-center justify-center text-[30px] font-semibold text-[#2f8050]">Sheet1</div>
    <svg class="ml-[36px] mt-[18px] w-[27px] h-[27px]" viewBox="0 0 27 27"><path d="M13.500 0v27M0 13.500h27" stroke="#aaaaaa" stroke-width="5"/></svg>
    <i class="ml-[32px] mt-[2px] w-[2px] h-[50px] bg-[#5a5a5a]"></i>
  </div>

  <!-- status bar -->
  <footer class="h-[55px] shrink-0 flex items-center bg-linear-to-b from-[#4c4c4c] to-[#3f3f3f] border-t-2 border-[#1a1a1a] text-[29.500px] text-[#e6e6e6] whitespace-nowrap">
    <span class="ml-[61px] w-[85px]">Ready</span>
    <svg class="ml-[49px] w-[40px] h-[38px]" viewBox="0 0 40 38" fill="none" stroke="#e2e2e2" stroke-width="2"><circle cx="18" cy="6" r="4"/><path d="M3 7c5 6 9 7 15 7s9-1 13-7M13 15c1 5 0 9-1 13-1 4-2 8 2 8M23 15c0 4 0 7 1 10M22 29l5 6 11-12"/></svg>
    <span class="ml-[6px]">Accessibility: Good to go</span>
    <div class="ml-auto w-[91px] self-stretch bg-[#5c5c5c] flex items-center justify-center">
      <svg class="w-[32px] h-[31px]" viewBox="0 0 32 31" fill="none" stroke="#f0f0f0" stroke-width="2"><path d="M1 1h30v29H1zM1 10.500h30M1 20h30M11 1v29M21 1v29"/></svg>
    </div>
    <svg class="ml-[26px] w-[35px] h-[32px]" viewBox="0 0 35 32" fill="none" stroke="#f0f0f0" stroke-width="2"><path d="M1 1h33v30H1zM7 6h21v20H7z"/><path d="M12 11h11M12 16h11M12 21h11" stroke-width="2.500"/></svg>
    <svg class="ml-[54px] w-[34px] h-[32px]" viewBox="0 0 34 32" fill="none" stroke="#f0f0f0" stroke-width="2"><path d="M1 1h32v30H1zM1 18h21V1M11 1v17"/></svg>
    <svg class="ml-[47px] w-[20px] h-[5px]" viewBox="0 0 20 5"><rect width="20" height="5" fill="#f0f0f0"/></svg>
    <div class="ml-[18px] w-[247px] h-[16px] rounded-full bg-[#787878] relative">
      <i class="absolute left-[104px] top-[-12px] w-[39px] h-[40px] rounded-full bg-[#9c9c9c]"></i>
    </div>
    <svg class="ml-[17px] w-[21px] h-[21px]" viewBox="0 0 21 21"><path d="M10.500 0v21M0 10.500h21" stroke="#f0f0f0" stroke-width="5"/></svg>
    <span class="ml-[42px] w-[78px] mr-[56px] text-[31px] font-light">100%</span>
  </footer>
</div>

<script>
  // fill the grid: headers, first row of titles, then blank cells
  const letters = ['A', 'B', 'C', 'D', 'E', 'F', 'G'];
  const titles = [
    'Project/Run Name', 'Description', 'Data Source', 'Sequencing Platform',
    'Interleaved or Single-end Illumina/PacBio FASTQ', 'Illumina Paired-end R1 FASTQ', 'Illumina Paired-end  R2  FASTQ'
  ];
  const headBase = 'flex items-center justify-center pt-[3px] text-[26px] font-medium text-white';
  let html = '<div class="bg-[#151515] border-r-2 border-b-2 border-[#cfcfcf] flex items-center justify-center"><svg class="w-[38px] h-[36px]" viewBox="0 0 38 36"><path d="M38 0v36H0z" fill="#5c5c5c"/></svg></div>';
  letters.forEach(l => {
    const on = l === 'C';
    html += `<div class="${headBase} ${on ? 'bg-[#5a5a5a] border-b-4 border-[#2e6e42]' : 'bg-[#151515] border-r-2 border-b-2 border-r-[#4a4a4a] border-b-[#cfcfcf]'}">${l}</div>`;
  });
  for (let r = 1; r <= 41; r++) {
    const on = r === 2;
    html += `<div class="${headBase} ${on ? 'bg-[#5a5a5a] border-r-[3px] border-r-[#2e6e42]' : 'bg-[#151515] border-r-2 border-r-[#cfcfcf]'} border-b-2 border-b-[#555555]">${r <= 40 ? r : ''}</div>`;
    letters.forEach((l, i) => {
      const text = r === 1 ? titles[i] : '';
      html += `<div class="bg-white border-r-2 border-b-2 border-[#d6d6d6] pl-[5px] pt-[6px] flex items-center text-[26.800px] text-[#111111] whitespace-pre [font-family:Roboto,sans-serif]">${text}</div>`;
    });
  }
  document.getElementById('sheet').innerHTML = html;
</script>
</body>
</html>
